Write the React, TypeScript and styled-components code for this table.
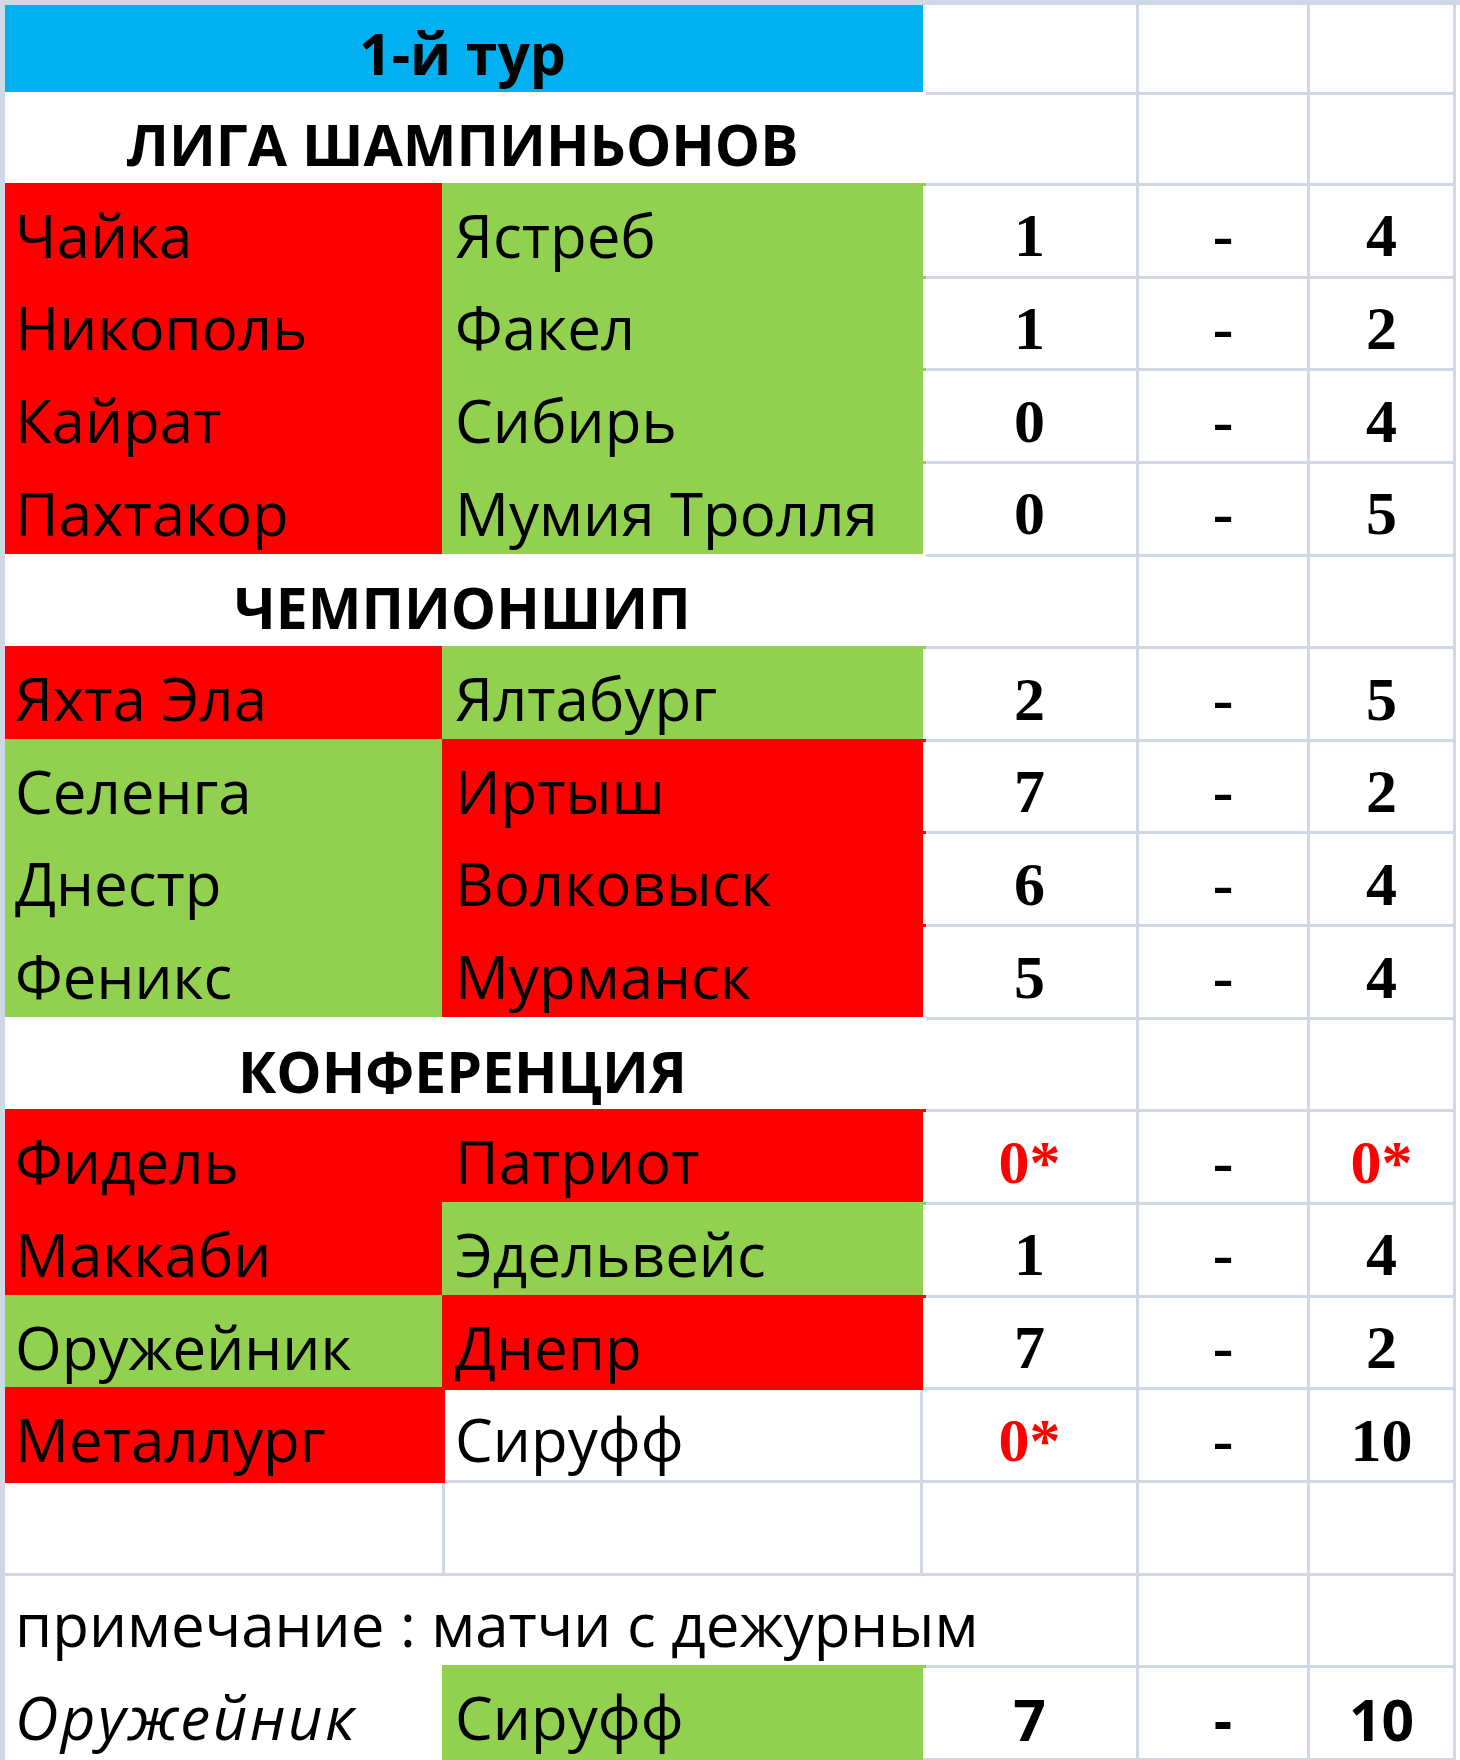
import React from 'react';
import styled, { createGlobalStyle, css } from 'styled-components';

const GRID = '#d0d7e5';
const FILLS = {
  red: '#ff0000',
  green: '#92d050',
  blue: '#00b0f0',
  white: '#ffffff',
};

type Fill = keyof typeof FILLS;

type Match = {
  home: string;
  homeFill?: Fill;
  away: string;
  awayFill?: Fill;
  homeGoals: string;
  awayGoals: string;
};

type Section = {
  title: string;
  matches: Match[];
};

const sections: Section[] = [
  {
    title: 'ЛИГА ШАМПИНЬОНОВ',
    matches: [
      { home: 'Чайка', homeFill: 'red', away: 'Ястреб', awayFill: 'green', homeGoals: '1', awayGoals: '4' },
      { home: 'Никополь', homeFill: 'red', away: 'Факел', awayFill: 'green', homeGoals: '1', awayGoals: '2' },
      { home: 'Кайрат', homeFill: 'red', away: 'Сибирь', awayFill: 'green', homeGoals: '0', awayGoals: '4' },
      { home: 'Пахтакор', homeFill: 'red', away: 'Мумия Тролля', awayFill: 'green', homeGoals: '0', awayGoals: '5' },
    ],
  },
  {
    title: 'ЧЕМПИОНШИП',
    matches: [
      { home: 'Яхта Эла', homeFill: 'red', away: 'Ялтабург', awayFill: 'green', homeGoals: '2', awayGoals: '5' },
      { home: 'Селенга', homeFill: 'green', away: 'Иртыш', awayFill: 'red', homeGoals: '7', awayGoals: '2' },
      { home: 'Днестр', homeFill: 'green', away: 'Волковыск', awayFill: 'red', homeGoals: '6', awayGoals: '4' },
      { home: 'Феникс', homeFill: 'green', away: 'Мурманск', awayFill: 'red', homeGoals: '5', awayGoals: '4' },
    ],
  },
  {
    title: 'КОНФЕРЕНЦИЯ',
    matches: [
      { home: 'Фидель', homeFill: 'red', away: 'Патриот', awayFill: 'red', homeGoals: '0*', awayGoals: '0*' },
      { home: 'Маккаби', homeFill: 'red', away: 'Эдельвейс', awayFill: 'green', homeGoals: '1', awayGoals: '4' },
      { home: 'Оружейник', homeFill: 'green', away: 'Днепр', awayFill: 'red', homeGoals: '7', awayGoals: '2' },
      { home: 'Металлург', homeFill: 'red', away: 'Сируфф', homeGoals: '0*', awayGoals: '10' },
    ],
  },
];

const GlobalStyle = createGlobalStyle`
  html, body {
    margin: 0;
    padding: 0;
    background: #ffffff;
  }
  body {
    font-family: 'Open Sans', 'Noto Sans', sans-serif;
    color: #000000;
  }
`;

const Sheet = styled.div`
  width: 1460px;
  height: 1760px;
  box-sizing: border-box;
  padding: 5px 0 0 5px;
  background: ${GRID};
  overflow: hidden;
`;

const Grid = styled.div`
  display: grid;
  grid-template-columns: 440px 478px 216px 171px 146px;
  grid-template-rows: 90px 91px repeat(17, 92.65px);
  background: #ffffff;
  overflow: hidden;
`;

// a filled cell hides the gridlines around it, like Excel does
const Cell = styled.div<{ $fill?: Fill; $span?: number }>`
  grid-column: span ${({ $span }) => $span ?? 1};
  box-sizing: border-box;
  min-width: 0;
  display: flex;
  align-items: flex-end;
  white-space: nowrap;
  font-size: 60px;
  line-height: 1.33;
  background: ${({ $fill }) => ($fill ? FILLS[$fill] : '#ffffff')};
  border-right: 3px solid ${({ $fill }) => ($fill ? FILLS[$fill] : GRID)};
  border-bottom: 3px solid ${({ $fill }) => ($fill ? FILLS[$fill] : GRID)};
  ${({ $fill }) =>
    $fill &&
    css`
      box-shadow: 0 0 0 3px ${FILLS[$fill]};
    `}
`;

const TitleCell = styled(Cell)`
  justify-content: center;
  font-size: 57px;
  font-weight: 700;
`;

const SectionCell = styled(Cell)`
  justify-content: center;
  font-size: 57px;
  font-weight: 700;
`;

const TeamCell = styled(Cell)<{ $italic?: boolean }>`
  padding-left: 10px;
  font-weight: 500;
  ${({ $italic }) =>
    $italic &&
    css`
      font-style: italic;
      letter-spacing: 2.5px;
    `}
`;

const ScoreCell = styled(Cell)<{ $red?: boolean; $sans?: boolean }>`
  justify-content: center;
  font-weight: 700;
  color: ${({ $red }) => ($red ? '#ff0000' : '#000000')};
  ${({ $sans }) =>
    $sans
      ? css`
          font-size: 57px;
        `
      : css`
          font-family: 'Liberation Serif', 'DejaVu Serif', serif;
          font-size: 62px;
          line-height: 1.149;
          padding-bottom: 4px;
        `}
`;

const NoteCell = styled(Cell)`
  padding-left: 10px;
  font-weight: 500;
`;

const EmptyRow = () => (
  <>
    {[0, 1, 2, 3, 4].map((i) => (
      <Cell key={i} />
    ))}
  </>
);

const App = () => (
  <>
    <GlobalStyle />
    <Sheet>
      <Grid>
        <TitleCell $span={2} $fill="blue">
          1-й тур
        </TitleCell>
        <Cell />
        <Cell />
        <Cell />

        {sections.map((section) => (
          <React.Fragment key={section.title}>
            <SectionCell $span={2} $fill="white">
              {section.title}
            </SectionCell>
            <Cell />
            <Cell />
            <Cell />
            {section.matches.map((m) => (
              <React.Fragment key={m.home}>
                <TeamCell $fill={m.homeFill}>{m.home}</TeamCell>
                <TeamCell $fill={m.awayFill}>{m.away}</TeamCell>
                <ScoreCell $red={m.homeGoals.includes('*')}>{m.homeGoals}</ScoreCell>
                <ScoreCell>-</ScoreCell>
                <ScoreCell $red={m.awayGoals.includes('*')}>{m.awayGoals}</ScoreCell>
              </React.Fragment>
            ))}
          </React.Fragment>
        ))}

        <EmptyRow />

        <NoteCell $span={3}>примечание : матчи с дежурным</NoteCell>
        <Cell />
        <Cell />

        <TeamCell $fill="white" $italic>
          Оружейник
        </TeamCell>
        <TeamCell $fill="green">Сируфф</TeamCell>
        <ScoreCell $sans>7</ScoreCell>
        <ScoreCell $sans>-</ScoreCell>
        <ScoreCell $sans>10</ScoreCell>
      </Grid>
    </Sheet>
  </>
);

export default App;
